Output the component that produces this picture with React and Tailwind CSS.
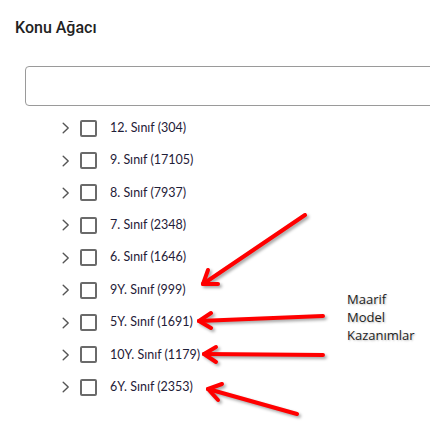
import React from "react";

const items = [
  "12. Sınıf (304)",
  "9. Sınıf (17105)",
  "8. Sınıf (7937)",
  "7. Sınıf (2348)",
  "6. Sınıf (1646)",
  "9Y. Sınıf (999)",
  "5Y. Sınıf (1691)",
  "10Y. Sınıf (1179)",
  "6Y. Sınıf (2353)",
];

function Chevron() {
  return (
    <svg width="8" height="12" viewBox="0 0 8 12" className="shrink-0">
      <path d="M1.2 1.2 L6.2 6 L1.2 10.8" fill="none" stroke="#555" strokeWidth="1.4" strokeLinecap="round" strokeLinejoin="round" />
    </svg>
  );
}

function Arrow({ x1, y1, x2, y2, w1, w2 }) {
  return (
    <g>
      <line x1={x1} y1={y1} x2={x2} y2={y2} />
      <line x1={x2} y1={y2} x2={w1[0]} y2={w1[1]} />
      <line x1={x2} y1={y2} x2={w2[0]} y2={w2[1]} />
    </g>
  );
}

export default function App() {
  return (
    <div className="relative w-[430px] h-[435px] overflow-hidden bg-white">
      <div className="pt-[17px] pl-[15px]">
        <h2 className="text-[16px] leading-[21px] font-medium text-[#222]" style={{ fontFamily: "Roboto, sans-serif" }}>
          Konu Ağacı
        </h2>
      </div>
      <div className="mt-[28px] ml-[25px] w-[420px] h-[40px] rounded-[4px] border border-[#9a9a9a] bg-white" />
      <ul className="mt-[6px] pl-[62px]" style={{ fontFamily: "Lato, sans-serif" }}>
        {items.map((t) => (
          <li key={t} className="flex items-center h-[32.4px]">
            <Chevron />
            <span className="ml-[10px] w-[17px] h-[17px] rounded-[2px] border-2 border-[#6a6a6a] shrink-0" />
            <span className="ml-[13px] text-[12.5px] text-[#1f2038]">{t}</span>
          </li>
        ))}
      </ul>
      <svg
        className="absolute left-0 top-0 pointer-events-none"
        width="430"
        height="435"
        viewBox="0 0 430 435"
        style={{ filter: "drop-shadow(2px 2px 1.5px rgba(0,0,0,0.35))" }}
      >
        <g stroke="#ff0000" strokeWidth="4" strokeLinecap="round" fill="none">
          <Arrow x1={305} y1={215} x2={203} y2={284} w1={[208, 270]} w2={[218, 284]} />
          <Arrow x1={323} y1={316} x2={199} y2={321} w1={[211, 313]} w2={[211, 328]} />
          <Arrow x1={323} y1={355} x2={204} y2={354} w1={[216, 347]} w2={[216, 362]} />
          <Arrow x1={297} y1={414} x2={208} y2={389} w1={[222, 384]} w2={[218, 400]} />
        </g>
      </svg>
      <div
        className="absolute left-[347px] top-[290px] text-[13px] leading-[18px] text-[#222]"
        style={{ fontFamily: "'Open Sans', sans-serif", textShadow: "1px 1px 2px rgba(0,0,0,0.25)" }}
      >
        <div>Maarif</div>
        <div>Model</div>
        <div>Kazanımlar</div>
      </div>
    </div>
  );
}
